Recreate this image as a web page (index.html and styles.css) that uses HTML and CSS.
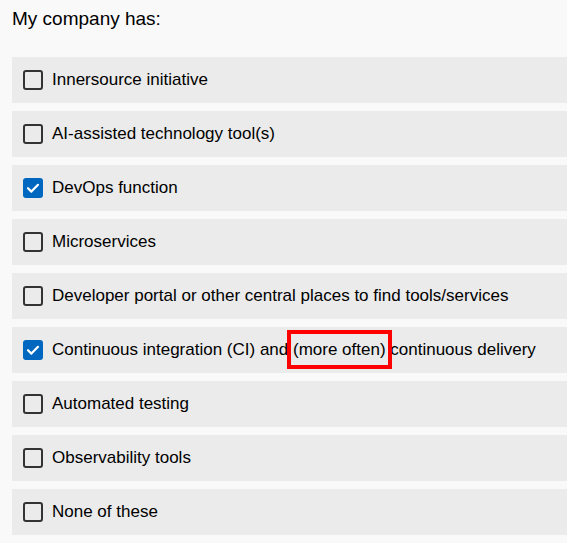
FILE: index.html
```html
<!DOCTYPE html>
<html>
<head>
<meta charset="utf-8">
<link rel="stylesheet" href="styles.css">
</head>
<body>
<div class="page">
  <div class="title">My company has:</div>
  <div class="list">
    <label class="row"><span class="box"></span><span class="text">Innersource initiative</span></label>
    <label class="row"><span class="box"></span><span class="text">AI-assisted technology tool(s)</span></label>
    <label class="row"><span class="box checked"><svg viewBox="0 0 20 20" width="20" height="20"><path d="M5 10.2 L8.4 13.6 L15 6.8" fill="none" stroke="#fff" stroke-width="2.2" stroke-linecap="round" stroke-linejoin="round"/></svg></span><span class="text">DevOps function</span></label>
    <label class="row"><span class="box"></span><span class="text">Microservices</span></label>
    <label class="row"><span class="box"></span><span class="text">Developer portal or other central places to find tools/services</span></label>
    <label class="row"><span class="box checked"><svg viewBox="0 0 20 20" width="20" height="20"><path d="M5 10.2 L8.4 13.6 L15 6.8" fill="none" stroke="#fff" stroke-width="2.2" stroke-linecap="round" stroke-linejoin="round"/></svg></span><span class="text">Continuous integration (CI) and <span class="mark">(more often)</span> continuous delivery</span></label>
    <label class="row"><span class="box"></span><span class="text">Automated testing</span></label>
    <label class="row"><span class="box"></span><span class="text">Observability tools</span></label>
    <label class="row"><span class="box"></span><span class="text">None of these</span></label>
  </div>
</div>
</body>
</html>
```
FILE: styles.css
```css
html, body {
  margin: 0;
  padding: 0;
  background: #f9f9f9;
  overflow: hidden;
}
.page {
  padding: 5px 0 0 12px;
  font-family: "Liberation Sans", Arial, sans-serif;
  color: #000;
}
.title {
  font-size: 19px;
  line-height: 28px;
  margin-bottom: 24px;
}
.list {
  display: flex;
  flex-direction: column;
  gap: 8px;
  width: 580px;
}
.row {
  display: flex;
  align-items: center;
  height: 46px;
  background: #ebebeb;
  padding-left: 11px;
  box-sizing: border-box;
  font-size: 17px;
  white-space: nowrap;
}
.box {
  width: 20px;
  height: 20px;
  box-sizing: border-box;
  border: 2px solid #333;
  border-radius: 3px;
  margin-right: 9px;
  flex: none;
  display: flex;
  align-items: center;
  justify-content: center;
}
.box.checked {
  background: #0067c0;
  border: none;
}
.box svg { display: block; }
.mark {
  padding: 4px 0;
  outline: 4px solid #f00;
  outline-offset: 2px;
}
```
